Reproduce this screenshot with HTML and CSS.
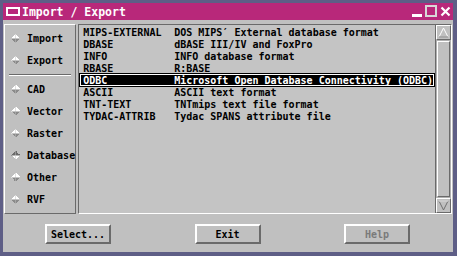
FILE: index.html
```html
<!DOCTYPE html>
<html lang="en">
<head>
    <meta charset="UTF-8">
    <title>Import / Export</title>
    <link rel="stylesheet" href="styles.css">
</head>
<body>
    <div class="window">
        <div class="titlebar">
            <span class="menu-icon"></span>
            <span class="title">Import / Export</span>
            <div class="title-buttons">
                <span class="tb tb-min"></span>
                <span class="tb tb-max"></span>
                <span class="tb tb-close">
                    <svg width="11" height="11" viewBox="0 0 11 11"><path d="M1.5 1.5 L9.5 9.5 M9.5 1.5 L1.5 9.5" stroke="#fff" stroke-width="2.2"/></svg>
                </span>
            </div>
        </div>

        <div class="body">
            <div class="main">
                <div class="side">
                    <div class="side-item"><span class="arrow"></span>Import</div>
                    <div class="side-item"><span class="arrow"></span>Export</div>
                    <div class="sep"></div>
                    <div class="side-item"><span class="arrow"></span>CAD</div>
                    <div class="side-item"><span class="arrow"></span>Vector</div>
                    <div class="side-item"><span class="arrow"></span>Raster</div>
                    <div class="side-item active"><span class="arrow"></span>Database</div>
                    <div class="side-item"><span class="arrow"></span>Other</div>
                    <div class="side-item"><span class="arrow"></span>RVF</div>
                </div>

                <div class="list-box">
                    <div class="list" id="list"></div>
                    <div class="scrollbar">
                        <div class="sb-btn">
                            <svg width="11" height="11" viewBox="0 0 11 11"><path d="M5.5 1 L10 10 L1 10 Z" fill="#c0c0c0" stroke="#fff"/><path d="M10 10 L1 10" stroke="#707070"/></svg>
                        </div>
                        <div class="sb-track"><div class="sb-thumb"></div></div>
                        <div class="sb-btn">
                            <svg width="11" height="11" viewBox="0 0 11 11"><path d="M1 1 L10 1 L5.5 10 Z" fill="#c0c0c0" stroke="#707070"/><path d="M1 1 L10 1" stroke="#fff"/></svg>
                        </div>
                    </div>
                </div>
            </div>

            <div class="buttons">
                <button class="btn">Select...</button>
                <button class="btn">Exit</button>
                <button class="btn disabled">Help</button>
            </div>
        </div>
    </div>

    <script>
        const formats = [
            ["MIPS-EXTERNAL", "DOS MIPS\u2032 External database format"],
            ["DBASE", "dBASE III/IV and FoxPro"],
            ["INFO", "INFO database format"],
            ["RBASE", "R:BASE"],
            ["ODBC", "Microsoft Open Database Connectivity (ODBC)"],
            ["ASCII", "ASCII text format"],
            ["TNT-TEXT", "TNTmips text file format"],
            ["TYDAC-ATTRIB", "Tydac SPANS attribute file"],
        ];

        const list = document.getElementById("list");

        formats.forEach(([name, desc]) => {
            let row = document.createElement("div");
            row.className = "row" + (name == "ODBC" ? " selected" : "");
            row.innerHTML = `<span class="name">${name}</span><span class="desc">${desc}</span>`;
            list.appendChild(row);
        });
    </script>
</body>
</html>
```

FILE: styles.css
```css
body {
    margin: 0;
    background: #5e5e86;
    font-family: "DejaVu Sans Mono", "Liberation Mono", monospace;
    font-weight: bold;
    font-size: 10px;
    color: #000;
}
.window {
    margin: 3px 4px 0 3px;
    width: 450px;
}
.titlebar {
    height: 17px;
    background: #b8287a;
    display: flex;
    align-items: center;
    color: #fff;
    padding-left: 3px;
}
.menu-icon {
    width: 10px;
    height: 5px;
    border: 2px solid #fff;
    box-sizing: content-box;
    margin-right: 2px;
}
.title {
    font-size: 11.5px;
}
.title-buttons {
    margin-left: auto;
    display: flex;
    gap: 1px;
    margin-right: 1px;
}
.tb {
    width: 13px;
    height: 13px;
    display: flex;
    align-items: center;
    justify-content: center;
}
.tb-min {
    background: linear-gradient(#fff, #fff) no-repeat;
    background-size: 10px 3px;
    background-position: 2px 9px;
}
.tb-max {
    border: 2px solid #d8d8d8;
    box-sizing: border-box;
    width: 12px;
    height: 12px;
    margin: 0 1px;
}
.body {
    background: #c0c0c0;
    padding: 4px 0 8px 1px;
}
.main {
    display: flex;
    height: 190px;
}
.side {
    width: 73px;
    border: 1px solid;
    border-color: #fff #6a6a6a #6a6a6a #fff;
    padding: 2px 0 0 0;
    margin-right: 2px;
}
.side-item {
    height: 22px;
    display: flex;
    align-items: center;
    padding-left: 6px;
}
.arrow {
    width: 9px;
    height: 9px;
    margin-right: 7px;
    background:
        linear-gradient(to bottom right, transparent 50%, #fff 50%) 0 0 / 4.5px 4.5px no-repeat,
        linear-gradient(to bottom left, transparent 50%, #fff 50%) 4.5px 0 / 4.5px 4.5px no-repeat,
        linear-gradient(to top right, transparent 50%, #8a8a8a 50%) 0 4.5px / 4.5px 4.5px no-repeat,
        linear-gradient(to top left, transparent 50%, #8a8a8a 50%) 4.5px 4.5px / 4.5px 4.5px no-repeat;
}
.side-item.active .arrow {
    background:
        linear-gradient(to bottom right, transparent 50%, #6a6a6a 50%) 0 0 / 4.5px 4.5px no-repeat,
        linear-gradient(to bottom left, transparent 50%, #6a6a6a 50%) 4.5px 0 / 4.5px 4.5px no-repeat,
        linear-gradient(to top right, transparent 50%, #fff 50%) 0 4.5px / 4.5px 4.5px no-repeat,
        linear-gradient(to top left, transparent 50%, #fff 50%) 4.5px 4.5px / 4.5px 4.5px no-repeat;
}
.sep {
    height: 0;
    border-top: 1px solid #6a6a6a;
    border-bottom: 1px solid #fff;
    margin: 3px 4px 2px 4px;
}
.list-box {
    flex: 1;
    display: flex;
    border: 1px solid;
    border-color: #6a6a6a #fff #fff #6a6a6a;
    margin-right: 2px;
}
.list {
    flex: 1;
    background: #c4c4c4;
    padding: 1px 1px 0 1px;
}
.row {
    height: 12px;
    line-height: 12px;
    display: flex;
    padding-left: 2px;
    white-space: pre;
    border: 1px solid transparent;
    box-sizing: border-box;
}
.row .name {
    width: 91px;
}
.row.selected {
    background: #000;
    color: #fff;
    border-color: #fff;
    outline: 1px solid #000;
}
.scrollbar {
    width: 15px;
    display: flex;
    flex-direction: column;
    background: #b0b0b0;
    border-left: 1px solid #6a6a6a;
}
.sb-btn {
    height: 15px;
    display: flex;
    align-items: center;
    justify-content: center;
    background: #c0c0c0;
    border: 1px solid;
    border-color: #fff #6a6a6a #6a6a6a #fff;
    box-sizing: border-box;
}
.sb-track {
    flex: 1;
    padding: 1px 0;
    display: flex;
}
.sb-thumb {
    flex: 1;
    background: #c0c0c0;
    border: 1px solid;
    border-color: #fff #6a6a6a #6a6a6a #fff;
    margin: 0 1px;
}
.buttons {
    display: flex;
    justify-content: space-between;
    padding: 10px 43px 0 41px;
}
.btn {
    width: 66px;
    height: 20px;
    font-family: inherit;
    font-weight: bold;
    font-size: 10px;
    background: #c0c0c0;
    border: 2px solid;
    border-color: #fff #6a6a6a #6a6a6a #fff;
    padding: 0;
    color: #000;
}
.btn.disabled {
    color: #7a7a7a;
}
```
